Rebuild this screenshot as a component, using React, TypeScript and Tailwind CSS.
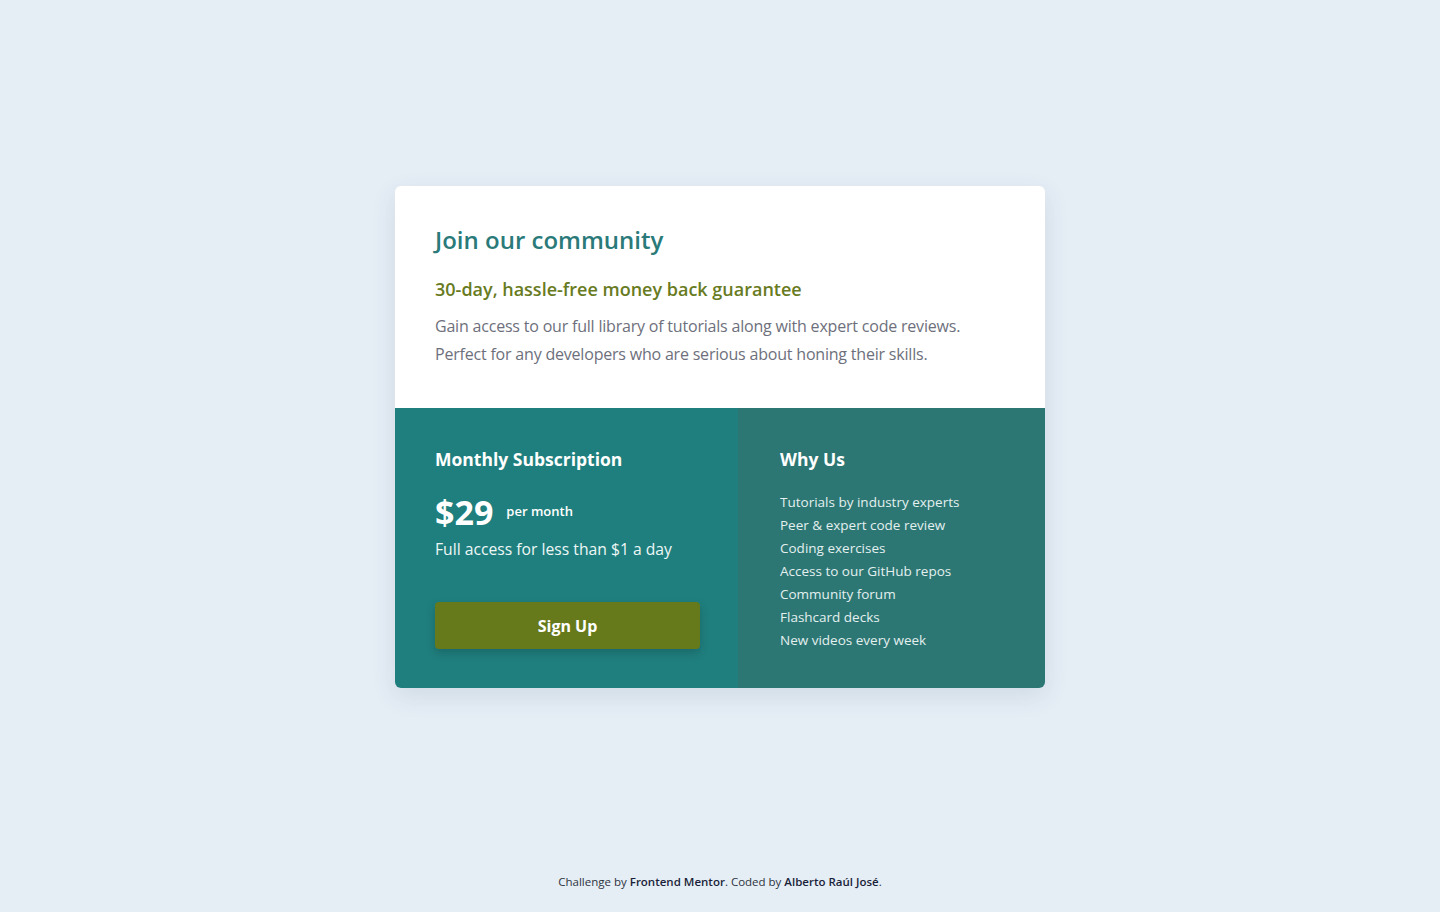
const features = [
  "Tutorials by industry experts",
  "Peer & expert code review",
  "Coding exercises",
  "Access to our GitHub repos",
  "Community forum",
  "Flashcard decks",
  "New videos every week",
];

export default function App() {
  return (
    <div className="min-h-screen flex flex-col bg-[#e5edf5] font-['Open_Sans','Lato',sans-serif]">
      <main className="flex-1 flex items-center justify-center">
        <div className="w-[650px] rounded-md overflow-hidden shadow-[0_8px_24px_rgba(60,90,120,0.12)]">
          {/* Top */}
          <div className="bg-white px-10 pt-10 pb-10">
            <h1 className="text-[24px] leading-[28px] font-semibold text-[#2a7a7a]">
              Join our community
            </h1>
            <h2 className="mt-[24px] text-[18px] leading-[22px] font-semibold text-[#687b22]">
              30-day, hassle-free money back guarantee
            </h2>
            <p className="mt-[12px] text-[16px] leading-[28px] tracking-[-0.2px] text-[#6d707c]">
              Gain access to our full library of tutorials along with expert code reviews.
              <br />
              Perfect for any developers who are serious about honing their skills.
            </p>
          </div>

          {/* Bottom */}
          <div className="flex">
            <div className="w-[343px] bg-[#1f7f7e] px-10 pt-10 pb-[39px] text-white">
              <h3 className="text-[17.5px] leading-[22px] font-bold">Monthly Subscription</h3>
              <div className="mt-[23px] flex items-center">
                <span className="text-[34px] leading-[38px] font-bold">$29</span>
                <span className="ml-[13px] text-[13px] font-semibold">per month</span>
              </div>
              <p className="mt-[7px] text-[15.7px] leading-[22px] text-[#eef7f6]">
                Full access for less than $1 a day
              </p>
              <button className="mt-[42px] w-[265px] h-[47px] rounded bg-[#677a1b] text-white text-[16px] font-bold shadow-[0_4px_10px_rgba(0,0,0,0.18)]">
                Sign Up
              </button>
            </div>
            <div className="flex-1 bg-[#2c7673] px-[42px] pt-10 pb-[35px] text-white">
              <h3 className="text-[17.5px] leading-[22px] font-bold">Why Us</h3>
              <ul className="mt-[21px] text-[13.5px] leading-[23px] text-[#e3f0ef]">
                {features.map((f) => (
                  <li key={f}>{f}</li>
                ))}
              </ul>
            </div>
          </div>
        </div>
      </main>
      <footer className="h-[38px] text-center text-[11.5px] leading-[16px] text-[#2d3440]">
        Challenge by <span className="font-semibold text-[#1a1f3a]">Frontend Mentor</span>. Coded by{" "}
        <span className="font-semibold text-[#1a1f3a]">Alberto Raúl José</span>.
      </footer>
    </div>
  );
}
